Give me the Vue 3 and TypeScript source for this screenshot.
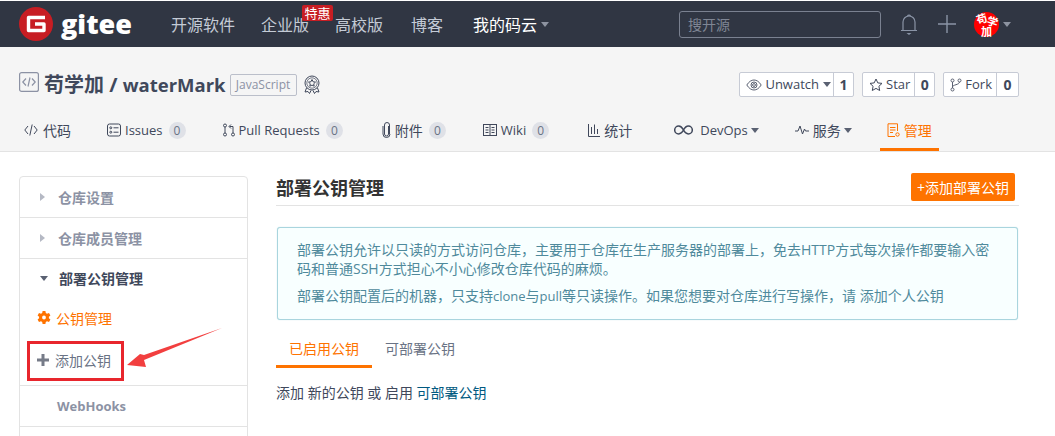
<template>
  <div class="page">
    <header class="topbar">
      <div class="logo">
        <svg width="34" height="34" viewBox="0 0 34 34">
          <circle cx="17" cy="17" r="17" fill="#c71d23" />
          <path d="M26 10.500H9.500v13H25v-6.500H16" fill="none" stroke="#fff" stroke-width="3.400" stroke-linejoin="round" />
        </svg>
        <span class="logo-text">gitee</span>
      </div>
      <nav class="topnav">
        <a>开源软件</a>
        <a class="promo">企业版<span class="promo-badge">特惠</span></a>
        <a>高校版</a>
        <a>博客</a>
        <a class="mine">我的码云<i class="caret caret-grey"></i></a>
      </nav>
      <div class="top-right">
        <div class="search">搜开源</div>
        <svg class="bell" width="18" height="24" viewBox="0 0 18 24" fill="none" stroke="#8a94a6" stroke-width="1.200">
          <path d="M1 18.500h16M3 18.500V10a6 6 0 0 1 12 0v8.500" />
          <path d="M7.500 4.200a1.600 1.600 0 0 1 3 0" />
          <path d="M6.500 21h5l-2.500 2z" fill="#8a94a6" stroke="none" />
        </svg>
        <svg class="plus" width="18" height="18" viewBox="0 0 18 18" stroke="#8a94a6" stroke-width="1.400">
          <path d="M0 9h18M9 0v18" />
        </svg>
        <div class="avatar">
          <span class="av1">苟</span><span class="av2">学</span><span class="av3">加</span>
        </div>
        <i class="caret caret-grey"></i>
      </div>
    </header>

    <section class="project">
      <div class="project-top">
        <div class="project-title">
          <svg class="repo-icon" width="20" height="20" viewBox="0 0 20 20" fill="none" stroke="#8c92a4" stroke-width="1.200">
            <rect x="0.600" y="0.600" width="18.800" height="18.800" rx="2" />
            <path d="M7 6.500 3.800 10 7 13.500M13 6.500l3.200 3.500-3.200 3.500M11 5.500 9 14.500" />
          </svg>
          <h1>苟学加 / <span class="repo-name">waterMark</span></h1>
          <span class="lang">JavaScript</span>
          <svg class="medal" width="18" height="20" viewBox="0 0 18 20" fill="none" stroke="#40485b" stroke-width="1">
            <circle cx="9" cy="8" r="7" />
            <circle cx="9" cy="8" r="5.200" stroke-width="0.700" />
            <path d="m9 4.500 1.100 2.300 2.400.3-1.800 1.700.5 2.400L9 10.100l-2.200 1.100.5-2.400-1.800-1.700 2.400-.3z" />
            <path d="M3.500 13 2 17l3-.5 1.500 2L8 15.500M14.500 13l1.500 4-3-.5-1.500 2L10 15.500" />
          </svg>
        </div>
        <div class="actions">
          <div class="action">
            <span class="action-main">
              <svg width="16" height="12" viewBox="0 0 16 12" fill="none" stroke="#5a6172" stroke-width="1">
                <path d="M0.800 6C3 2.500 5.500 1 8 1s5 1.500 7.200 5C13 9.500 10.500 11 8 11S3 9.500 0.800 6z" />
                <circle cx="8" cy="6" r="3" />
                <circle cx="8" cy="6" r="1.400" />
              </svg>
              Unwatch<i class="caret caret-dark"></i>
            </span>
            <b>1</b>
          </div>
          <div class="action">
            <span class="action-main">
              <svg width="14" height="14" viewBox="0 0 14 14" fill="none" stroke="#40485b" stroke-width="1">
                <path d="m7 1 1.800 3.900 4.200.5-3.100 2.900.8 4.200L7 10.400 3.300 12.500l.8-4.200L1 5.400l4.200-.5z" />
              </svg>
              Star
            </span>
            <b>0</b>
          </div>
          <div class="action">
            <span class="action-main">
              <svg width="12" height="14" viewBox="0 0 12 14" fill="none" stroke="#5a6172" stroke-width="1">
                <circle cx="2.500" cy="2.500" r="1.500" />
                <circle cx="9.500" cy="2.500" r="1.500" />
                <circle cx="2.500" cy="11.500" r="1.500" />
                <path d="M2.500 4v6M9.500 4c0 3-7 2.500-7 5" />
              </svg>
              Fork
            </span>
            <b>0</b>
          </div>
        </div>
      </div>

      <div class="tabs">
        <a class="tab">
          <svg width="14" height="14" viewBox="0 0 14 14" fill="none" stroke="#40485b" stroke-width="1">
            <path d="M4 3 .8 7 4 11M10 3l3.200 4L10 11M8.200 1.500 5.800 12.500" />
          </svg>
          代码
        </a>
        <a class="tab">
          <svg width="14" height="14" viewBox="0 0 14 14" fill="none" stroke="#40485b" stroke-width="1">
            <rect x="0.500" y="1" width="13" height="12" rx="2" />
            <circle cx="3.800" cy="4.800" r="1" />
            <circle cx="3.800" cy="9.200" r="1" />
            <path d="M6.500 4.800h5M6.500 9.200h5" />
          </svg>
          <span class="latin">Issues</span><span class="count">0</span>
        </a>
        <a class="tab">
          <svg width="12" height="14" viewBox="0 0 12 14" fill="none" stroke="#40485b" stroke-width="1">
            <circle cx="2" cy="2.500" r="1.500" />
            <circle cx="2" cy="11.500" r="1.500" />
            <circle cx="10" cy="11.500" r="1.500" />
            <path d="M2 4v6M10 10V3.500H6.500M8 1.500l-2 2 2 2" />
          </svg>
          <span class="latin">Pull Requests</span><span class="count">0</span>
        </a>
        <a class="tab">
          <svg width="9" height="16" viewBox="0 0 9 16" fill="none" stroke="#40485b" stroke-width="1">
            <path d="M6.500 4v8a2 2 0 0 1-4 0V3a2.500 2.500 0 0 1 5 0v9" />
            <path d="M1 4v8a3.500 3.500 0 0 0 7 0" />
          </svg>
          附件<span class="count">0</span>
        </a>
        <a class="tab">
          <svg width="14" height="12" viewBox="0 0 14 12" fill="none" stroke="#40485b" stroke-width="1">
            <rect x="0.500" y="0.500" width="13" height="11" />
            <path d="M7 0.500v11M2.500 3.500h3M2.500 6h3M2.500 8.500h3M8.500 3.500h3M8.500 6h3M8.500 8.500h3" />
          </svg>
          <span class="latin">Wiki</span><span class="count">0</span>
        </a>
        <a class="tab">
          <svg width="12" height="13" viewBox="0 0 12 13" fill="none" stroke="#40485b" stroke-width="1">
            <path d="M.5 0v12.500H12M3.500 3v7M6.500 0.500V10M9.500 5v5" />
          </svg>
          统计
        </a>
        <a class="tab">
          <svg width="19" height="10" viewBox="0 0 19 10" fill="none" stroke="#40485b" stroke-width="1.500">
            <path d="M9.500 5C8 2.200 6.500 1 4.700 1a4 4 0 0 0 0 8C6.500 9 8 7.800 9.500 5c1.500-2.800 3-4 4.800-4a4 4 0 0 1 0 8C12.500 9 11 7.800 9.500 5z" />
          </svg>
          <span class="latin devops">DevOps</span><i class="caret caret-dark"></i>
        </a>
        <a class="tab">
          <svg width="14" height="10" viewBox="0 0 14 10" fill="none" stroke="#40485b" stroke-width="1">
            <path d="M0 6h3l2-5 2.500 8L9.500 4l1 2H14" />
          </svg>
          服务<i class="caret caret-dark"></i>
        </a>
        <a class="tab tab-active">
          <svg width="13" height="15" viewBox="0 0 13 15" fill="none" stroke="#fe7300" stroke-width="1">
            <path d="M8 13.500H1V.8h9.500V8M3 4.500h5.500M3 7h5.500M3 9.500h3" />
            <circle cx="10.500" cy="11.500" r="1.700" />
          </svg>
          管理
        </a>
      </div>
    </section>

    <main class="content">
      <aside class="sidebar">
        <div class="side-row"><i class="tri-right"></i>仓库设置</div>
        <div class="side-row"><i class="tri-right"></i>仓库成员管理</div>
        <div class="side-group">
          <div class="side-row side-open"><i class="tri-down"></i>部署公钥管理</div>
          <div class="side-sub sub-active">
            <svg width="14" height="14" viewBox="0 0 14 14">
              <path fill="#fe7300" fill-rule="evenodd" d="M5.600 0h2.800l.4 2 1.200.7 2-.7L13.400 4.400 11.900 5.800v1.400l1.500 1.400L12 11l-2-.7-1.200.7-.4 2H5.600l-.4-2-1.200-.7-2 .7L.6 8.600l1.500-1.400V5.800L.6 4.400 2 2l2 .7 1.200-.7zM7 4.600a1.900 1.900 0 1 0 0 3.800 1.900 1.900 0 0 0 0-3.800z" />
            </svg>
            公钥管理
          </div>
          <div class="side-sub side-add">
            <svg width="12" height="12" viewBox="0 0 12 12">
              <path d="M0 6h12M6 0v12" stroke="#767b88" stroke-width="3" />
            </svg>
            添加公钥
          </div>
        </div>
        <div class="side-row side-plain">WebHooks</div>
        <div class="side-row"></div>
      </aside>

      <section class="panel">
        <div class="panel-head">
          <h2>部署公钥管理</h2>
          <button class="add-btn">+添加部署公钥</button>
        </div>
        <div class="notice">
          <p>部署公钥允许以只读的方式访问仓库，主要用于仓库在生产服务器的部署上，免去HTTP方式每次操作都要输入密码和普通SSH方式担心不小心修改仓库代码的麻烦。</p>
          <p>部署公钥配置后的机器，只支持<span class="latin">clone</span>与<span class="latin">pull</span>等只读操作。如果您想要对仓库进行写操作，请 添加个人公钥</p>
        </div>
        <div class="key-tabs">
          <a class="key-tab key-active">已启用公钥</a>
          <a class="key-tab">可部署公钥</a>
        </div>
        <p class="hint">添加 <a>新的公钥</a> 或 启用 <a class="hint-link">可部署公钥</a></p>
      </section>
    </main>

    <!-- screenshot annotation -->
    <div class="mark-box"></div>
    <svg class="mark-arrow" width="100" height="44" viewBox="0 0 100 44">
      <path d="M96 1 18 28 14 27 1 38 20 40 18 33z" fill="#f23f3f" />
    </svg>
  </div>
</template>

<script setup lang="ts">
</script>

<style>
html,
body {
  margin: 0;
  background: #fff;
}
</style>

<style scoped>
.page {
  position: relative;
  width: 1055px;
  height: 436px;
  overflow: hidden;
  font-family: "Open Sans", "Noto Sans CJK SC", sans-serif;
  font-size: 14px;
  color: #40485b;
}

.topbar {
  display: flex;
  align-items: center;
  height: 46px;
  margin-top: 1px;
  padding: 0 44px 0 19px;
  background: #303643;
  color: #c4cbd6;
}

.logo {
  display: flex;
  align-items: center;
  gap: 8px;
  width: 152px;
}

.logo-text {
  font-size: 27px;
  font-weight: 800;
  line-height: 34px;
  color: #fff;
}

.topnav {
  display: flex;
  gap: 28px;
  font-size: 16px;
}

.promo {
  position: relative;
  margin: 0 -2px;
}

.promo-badge {
  position: absolute;
  top: -7px;
  left: 41px;
  width: 31px;
  height: 16px;
  border-radius: 2px;
  background: #c71d23;
  color: #fff;
  font-size: 13px;
  line-height: 16px;
  text-align: center;
}

.mine {
  display: flex;
  align-items: center;
  gap: 4px;
  margin-left: 2px;
  color: #fff;
}

.top-right {
  display: flex;
  align-items: center;
  margin-left: auto;
}

.search {
  box-sizing: border-box;
  width: 202px;
  height: 27px;
  padding-left: 8px;
  border: 1px solid #7a8190;
  border-radius: 3px;
  color: #7f8694;
  font-size: 14px;
  line-height: 25px;
}

.bell {
  margin-left: 19px;
}

.plus {
  margin-left: 20px;
}

.avatar {
  position: relative;
  width: 25px;
  height: 25px;
  margin-left: 18px;
  margin-right: 4px;
  border-radius: 50%;
  background: #f00;
  color: #fff;
  font-size: 11px;
  font-weight: 700;
}

.avatar span {
  position: absolute;
  line-height: 11px;
}

.av1 {
  top: 1px;
  left: 2px;
  transform: rotate(-18deg);
}

.av2 {
  top: 4px;
  left: 13px;
  transform: rotate(18deg);
}

.av3 {
  top: 14px;
  left: 7px;
}

.caret {
  display: inline-block;
  width: 0;
  height: 0;
  border-style: solid;
  border-width: 5px 4px 0;
  border-color: transparent;
}

.caret-grey {
  border-top-color: #8d93a0;
}

.caret-dark {
  border-top-color: #5a6172;
  margin-left: -1px;
}

.project {
  box-sizing: border-box;
  height: 105px;
  padding-top: 25px;
  border-bottom: 1px solid #e3e3e3;
  background: #f5f5f5;
}

.project-top {
  display: flex;
  align-items: center;
  justify-content: space-between;
  height: 25px;
  margin-bottom: 15px;
  padding: 0 36px 0 19px;
}

.project-title {
  display: flex;
  align-items: center;
}

.repo-icon {
  margin-top: -5px;
}

.project-title h1 {
  margin: -3px 4px 0 5px;
  font-size: 20px;
  font-weight: 700;
  color: #40485b;
}

.repo-name {
  font-size: 18.5px;
}

.lang {
  box-sizing: border-box;
  width: 67px;
  height: 22px;
  margin-top: 1px;
  border: 1px solid #bbbfca;
  border-radius: 2px;
  color: #8c92a4;
  font-size: 12px;
  line-height: 20px;
  text-align: center;
}

.medal {
  margin-left: 6px;
}

.actions {
  display: flex;
  gap: 8px;
}

.action {
  display: flex;
  box-sizing: border-box;
  height: 25px;
  border: 1px solid #c7cbd5;
  border-radius: 2px;
  background: #fff;
  font-size: 13px;
  line-height: 23px;
}

.action-main {
  display: flex;
  align-items: center;
  gap: 3px;
  padding: 0 4px 0 6px;
  border-right: 1px solid #c7cbd5;
  color: #40485b;
}

.action:first-child .action-main {
  padding-right: 2px;
}

.action-main .caret-dark {
  margin-left: 1px;
}

.action b {
  width: 19px;
  font-size: 14px;
  text-align: center;
}

.action:last-child b {
  width: 21px;
}

.tabs {
  display: flex;
  gap: 23px;
  padding-left: 17px;
}

.tab {
  display: flex;
  align-items: center;
  gap: 4px;
  box-sizing: border-box;
  height: 39px;
  padding: 0 7px 3px;
}

.tab:first-child {
  gap: 5px;
}

.tab:nth-child(2) {
  margin-left: -1px;
}

.tab:nth-child(4),
.tab:nth-child(6) {
  margin-left: 2px;
}

.tab:nth-child(7) {
  margin-left: 5px;
}

.tab:nth-child(8) {
  margin-left: -1px;
}

.tab:nth-child(9) {
  margin-left: -2px;
}

.latin {
  font-size: 13px;
}

.devops {
  margin-left: 3px;
}

.count {
  width: 17px;
  height: 17px;
  margin-left: 2px;
  border-radius: 50%;
  background: #dfe1e7;
  color: #6a7385;
  font-size: 12px;
  line-height: 17px;
  text-align: center;
}

.tab-active {
  padding-bottom: 0;
  border-bottom: 3px solid #fe7300;
  color: #fe7300;
}

.content {
  display: flex;
  align-items: flex-start;
  gap: 28px;
  padding: 24px 36px 0 19px;
}

.sidebar {
  flex: 0 0 229px;
  box-sizing: border-box;
  border: 1px solid #e3e3e3;
  border-radius: 4px;
}

.side-row {
  display: flex;
  align-items: center;
  gap: 13px;
  box-sizing: border-box;
  height: 41px;
  padding-left: 20px;
  border-bottom: 1px solid #e3e3e3;
  color: #8c92a4;
  font-weight: 700;
}

.side-group {
  padding-bottom: 4px;
  border-bottom: 1px solid #e3e3e3;
}

.side-open {
  height: 38px;
  border-bottom: 0;
  gap: 11px;
  color: #40485b;
}

.side-plain {
  padding-left: 37px;
  font-size: 13px;
}

.tri-right {
  width: 0;
  height: 0;
  border-style: solid;
  border-width: 4px 0 4px 5px;
  border-color: transparent transparent transparent #b5b9c4;
}

.tri-down {
  width: 0;
  height: 0;
  border-style: solid;
  border-width: 5px 4px 0;
  border-color: #5a6172 transparent transparent;
}

.side-sub {
  display: flex;
  align-items: center;
  gap: 5px;
  height: 42px;
  padding-left: 17px;
  color: #6a7385;
}

.side-add {
  gap: 6px;
}

.sub-active {
  color: #fe7300;
}

.panel {
  flex: 1;
  min-width: 0;
}

.panel-head {
  display: flex;
  align-items: center;
  justify-content: space-between;
  box-sizing: border-box;
  height: 33px;
  margin-top: -3px;
  padding: 0 4px 5px 0;
  border-bottom: 1px solid #e3e3e3;
}

.panel-head h2 {
  margin: 0;
  font-size: 18px;
  font-weight: 700;
  color: #333;
}

.add-btn {
  height: 28px;
  padding: 0 6px;
  border: 0;
  border-radius: 2px;
  background: #fe7300;
  color: #fff;
  font: inherit;
  font-size: 14px;
  white-space: nowrap;
}

.notice {
  box-sizing: border-box;
  width: 741px;
  height: 93px;
  margin: 21px 0 0 1px;
  padding: 12px 19px 0;
  border: 1px solid #a9d5de;
  border-radius: 3px;
  background: #f8ffff;
  box-shadow: 0 0 1px #a9d5de;
  color: #4f8a9c;
  line-height: 19px;
}

.notice p {
  margin: 0 0 8px;
}

.key-tabs {
  display: flex;
  margin-top: 12px;
}

.key-tab {
  box-sizing: border-box;
  width: 96px;
  height: 36px;
  color: #6a7385;
  line-height: 34px;
  text-align: center;
}

.key-active {
  border-bottom: 3px solid #fe7300;
  color: #fe7300;
}

.hint {
  margin: 15px 0 0;
  line-height: 20px;
}

.hint a {
  color: #40485b;
}

.hint .hint-link {
  color: #005980;
}

.mark-box {
  position: absolute;
  top: 341px;
  left: 27px;
  box-sizing: border-box;
  width: 97px;
  height: 40px;
  border: 3px solid #e8262d;
}

.mark-arrow {
  position: absolute;
  top: 327px;
  left: 126px;
}
</style>
